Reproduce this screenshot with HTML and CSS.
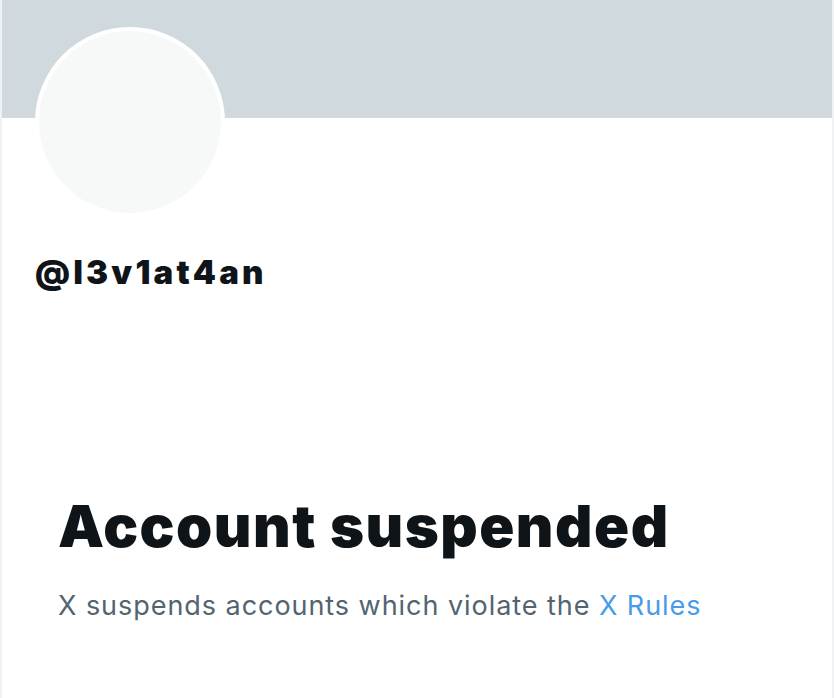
FILE: index.html
```html
<!DOCTYPE html>
<html lang="en">
<head>
<meta charset="utf-8">
<title>@l3v1at4an / X</title>
<link rel="stylesheet" href="styles.css">
</head>
<body>
<main class="profile">
  <div class="banner"></div>
  <div class="avatar-row">
    <div class="avatar"><div class="avatar-inner"></div></div>
  </div>
  <div class="handle">@l3v1at4an</div>
  <section class="notice">
    <h1 class="notice-title">Account suspended</h1>
    <p class="notice-text">X suspends accounts which violate the <a class="notice-link" href="#">X Rules</a></p>
  </section>
</main>
</body>
</html>
```

FILE: styles.css
```css
html, body {
  margin: 0;
  padding: 0;
  background: #ffffff;
}
body {
  font-family: Inter, "Noto Sans", "Liberation Sans", sans-serif;
  color: #0f1419;
}
.profile {
  width: 830px;
  height: 698px;
  border-left: 2px solid #eff3f4;
  border-right: 2px solid #eff3f4;
  box-sizing: content-box;
}
.banner {
  height: 118px;
  background: #cfd9de;
}
.avatar-row {
  margin-top: -91px;
  padding-left: 33px;
}
.avatar {
  width: 190px;
  height: 190px;
  border-radius: 50%;
  background: #ffffff;
  padding: 4px;
  box-sizing: border-box;
}
.avatar-inner {
  width: 100%;
  height: 100%;
  border-radius: 50%;
  background: #f7f9f9;
}
.handle {
  margin-top: 36px;
  padding-left: 33px;
  font-size: 33px;
  font-weight: 900;
  line-height: 38px;
  letter-spacing: 3.2px;
}
.notice {
  padding-left: 56px;
  margin-top: 200px;
}
.notice-title {
  margin: 0;
  font-size: 58px;
  font-weight: 900;
  line-height: 70px;
  letter-spacing: 1.5px;
}
.notice-text {
  margin: 27px 0 0;
  font-size: 27px;
  line-height: 36px;
  color: #536471;
  font-weight: 400;
  letter-spacing: 0.95px;
}
.notice-link {
  color: #499be9;
  text-decoration: none;
}
```
